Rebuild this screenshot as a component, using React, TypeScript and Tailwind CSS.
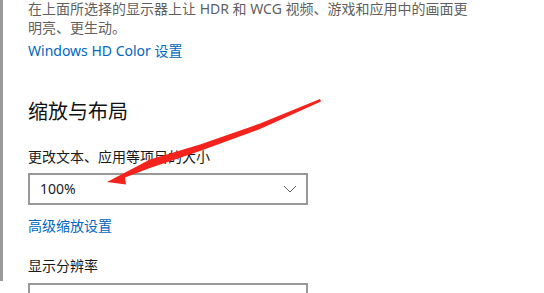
import React from 'react';

const font = { fontFamily: '"Segoe UI", "Noto Sans", "Noto Sans CJK SC", sans-serif' };

const Dropdown: React.FC<{ value?: string }> = ({ value }) => (
    <div className="flex h-[32px] w-[280px] items-center justify-between border-2 border-[#999999] bg-white pl-[10px] pr-[8px]">
        <span className="text-[14px] leading-[20px] text-[#1a1a1a]">{value}</span>
        {value && (
            <svg width="14" height="8" viewBox="0 0 14 8" fill="none" className="mr-[1px]">
                <path d="M1 1 L7 7 L13 1" stroke="#666666" strokeWidth="1" />
            </svg>
        )}
    </div>
);

// red annotation arrow pasted on top of the screenshot
const Arrow = () => (
    <svg className="pointer-events-none absolute left-0 top-0" width="544" height="293" viewBox="0 0 544 293">
        <polygon
            points="107,182 126,184.5 125,177.5 150,168 200,151 260,129 321,101.5 320,99 260,123.5 200,144.5 150,159.5"
            fill="#f5231d"
        />
    </svg>
);

export default function App() {
    return (
        <div className="relative h-[293px] w-[544px] overflow-hidden bg-white" style={font}>
            <div className="flex">
                <div className="h-[281px] w-[3px] shrink-0 bg-[#9a9a9a]" />
                <div className="flex flex-col items-start pl-[25px]">
                    <p className="mt-[-1px] text-[14px] leading-[19px] text-[#5f5f5f]">
                        在上面所选择的显示器上让 HDR 和 WCG 视频、游戏和应用中的画面更
                        <br />
                        明亮、更生动。
                    </p>
                    <a className="mt-[4px] text-[14px] leading-[20px] text-[#0067c0]">Windows HD Color 设置</a>

                    <h2 className="mt-[37px] text-[20px] leading-[28px] text-[#111111]">缩放与布局</h2>

                    <div className="mt-[21px] text-[14px] leading-[20px] text-[#1a1a1a]">更改文本、应用等项目的大小</div>
                    <div className="mt-[6px]">
                        <Dropdown value="100%" />
                    </div>
                    <a className="mt-[11px] text-[14px] leading-[20px] text-[#0067c0]">高级缩放设置</a>

                    <div className="mt-[20px] text-[14px] leading-[20px] text-[#1a1a1a]">显示分辨率</div>
                    <div className="mt-[7px]">
                        <Dropdown />
                    </div>
                </div>
            </div>
            <Arrow />
        </div>
    );
}
